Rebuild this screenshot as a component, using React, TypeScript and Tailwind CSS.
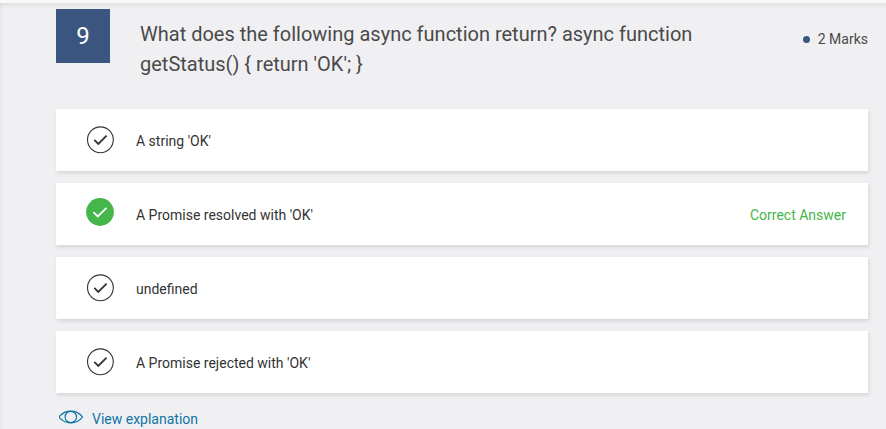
type Answer = { text: string; correct?: boolean };

const question = "What does the following async function return? async function getStatus() { return 'OK'; }";

const answers: Answer[] = [
  { text: "A string 'OK'" },
  { text: "A Promise resolved with 'OK'", correct: true },
  { text: 'undefined' },
  { text: "A Promise rejected with 'OK'" },
];

function CheckIcon({ correct }: { correct?: boolean }) {
  if (correct) {
    return (
      <svg className="-mt-1 h-7 w-7 shrink-0" viewBox="0 0 28 28" fill="none">
        <circle cx="14" cy="14" r="13.9" fill="#45b649" />
        <path d="M7.4 14.1L11.8 18.5L20.5 9.8" stroke="#fff" strokeWidth="1.8" />
      </svg>
    );
  }
  return (
    <svg className="h-7 w-7 shrink-0" viewBox="0 0 28 28" fill="none" stroke="#333">
      <circle cx="14.4" cy="13.8" r="12.9" strokeWidth="1.1" />
      <path d="M8.3 13.9L12.3 17.9L20.6 9.6" strokeWidth="1.8" />
    </svg>
  );
}

export default function App() {
  return (
    <div className="h-[429px] overflow-hidden bg-[#f9f7f8] pt-[3px] font-['Roboto',sans-serif]">
      <main className="h-[426px] overflow-hidden bg-[#f0f0f3] pt-1.5 pr-[18px] pl-14 shadow-[inset_0_5px_5px_-3px_rgba(0,0,0,0.08),inset_4px_0_4px_-3px_rgba(0,0,0,0.05)]">
        <header className="flex h-[100px] items-start">
          <div className="flex h-[54px] w-[54px] shrink-0 items-center justify-center bg-[#3a5580] text-2xl text-white">
            9
          </div>
          <h1 className="ml-[30px] w-[600px] pt-2.5 text-xl leading-[30px] text-[#4a4a4a]">{question}</h1>
          <div className="ml-auto flex items-center gap-2 pt-5 text-sm leading-5 whitespace-nowrap text-[#4a4a4a]">
            <span className="h-[7px] w-[7px] rounded-full bg-[#3a5580]" />
            2 Marks
          </div>
        </header>
        <ul className="flex flex-col gap-3">
          {answers.map((answer) => (
            <li
              key={answer.text}
              className="flex h-[62px] items-center bg-white pr-[22px] pl-[30px] text-sm text-[#333] shadow-[1px_2px_4px_rgba(0,0,0,0.12)]"
            >
              <CheckIcon correct={answer.correct} />
              <span className="ml-[22px] pt-0.5">{answer.text}</span>
              {answer.correct && <span className="ml-auto pt-0.5 text-[#45b649]">Correct Answer</span>}
            </li>
          ))}
        </ul>
        <a className="mt-4 ml-[3px] flex items-center text-sm leading-5 text-[#0f75a3]">
          <svg className="-mt-1 h-3.5 w-6 shrink-0" viewBox="0 0 24 14" fill="none" stroke="currentColor" strokeWidth="1.2">
            <path d="M0 7C3.2 3 7.3 1.2 11.8 1.2S20.4 3 23.6 7C20.4 11 16.3 12.8 11.8 12.8S3.2 11 0 7Z" />
            <circle cx="11.8" cy="7" r="5.7" />
          </svg>
          <span className="ml-[9px]">View explanation</span>
        </a>
      </main>
    </div>
  );
}
